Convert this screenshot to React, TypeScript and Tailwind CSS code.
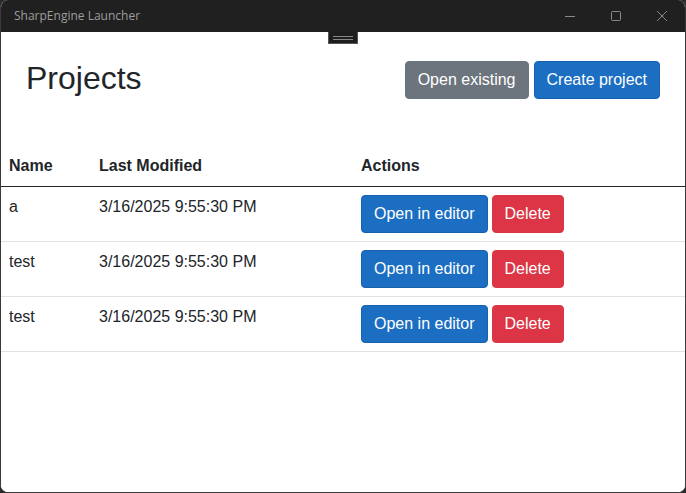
import React from "react";

const projects = [
  { name: "a", modified: "3/16/2025 9:55:30 PM" },
  { name: "test", modified: "3/16/2025 9:55:30 PM" },
  { name: "test", modified: "3/16/2025 9:55:30 PM" },
];

const TitleBar = () => {
  return (
    <div className="h-[32px] flex items-center bg-[#202020] text-[#9d9d9d] shrink-0">
      <span className="pl-[13px] text-[12px] flex-1 font-['Open_Sans',sans-serif]">
        SharpEngine Launcher
      </span>
      <div className="flex h-full">
        <div className="w-[46px] h-full flex items-center justify-center">
          <svg width="10" height="10" viewBox="0 0 10 10">
            <path d="M0 5.5h10" stroke="#8a8a8a" strokeWidth="1" />
          </svg>
        </div>
        <div className="w-[46px] h-full flex items-center justify-center">
          <svg width="10" height="10" viewBox="0 0 10 10">
            <rect x="0.5" y="0.5" width="9" height="9" rx="1" fill="none" stroke="#8a8a8a" strokeWidth="1" />
          </svg>
        </div>
        <div className="w-[46px] h-full flex items-center justify-center">
          <svg width="10" height="10" viewBox="0 0 10 10">
            <path d="M0 0L10 10M10 0L0 10" stroke="#8a8a8a" strokeWidth="1" />
          </svg>
        </div>
      </div>
    </div>
  );
};

const Btn = ({ children, kind }: any) => {
  const color =
    kind === "primary"
      ? "bg-[#1b6ec2] border-[#1861ac]"
      : kind === "danger"
      ? "bg-[#dc3545] border-[#dc3545]"
      : "bg-[#6c757d] border-[#6c757d]";
  return (
    <button
      className={`${color} border text-white rounded-[4px] px-[12px] py-[6px] text-[16px] leading-[24px] whitespace-nowrap`}
    >
      {children}
    </button>
  );
};

export default function App() {
  return (
    <div className="w-[686px] h-[493px] bg-[#2b2b2b] font-['Liberation_Sans',Arial,sans-serif] text-[#212529]">
      <div className="w-full h-full flex flex-col rounded-[8px] overflow-hidden border border-[#3a3a3a] border-t-0 bg-white">
        <TitleBar />
        <div className="relative flex-1 bg-white">
          <div className="absolute left-[327px] top-0 w-[30px] h-[12px] bg-[#1e1e1e] border border-[#555] border-t-0 flex flex-col items-center justify-center gap-[2px]">
            <div className="w-[20px] h-px bg-[#888]" />
            <div className="w-[20px] h-px bg-[#888]" />
          </div>
          <div className="flex items-center justify-between pl-[25px] pr-[25px] pt-[27px]">
            <h1 className="text-[32px] leading-[38px] mb-[4px]">Projects</h1>
            <div className="flex gap-[5px]">
              <Btn kind="secondary">Open existing</Btn>
              <Btn kind="primary">Create project</Btn>
            </div>
          </div>
          <table className="w-full mt-[45px] border-collapse text-[16px] leading-[24px]">
            <thead>
              <tr className="border-b border-[#212529]">
                <th className="text-left font-bold p-[8px] w-[90px]">Name</th>
                <th className="text-left font-bold p-[8px] w-[262px]">Last Modified</th>
                <th className="text-left font-bold p-[8px]">Actions</th>
              </tr>
            </thead>
            <tbody>
              {projects.map((p, i) => (
                <tr key={i} className="border-b border-[#dee2e6]">
                  <td className="align-top p-[8px]">{p.name}</td>
                  <td className="align-top p-[8px]">{p.modified}</td>
                  <td className="align-top p-[8px]">
                    <div className="flex gap-[4px]">
                      <Btn kind="primary">Open in editor</Btn>
                      <Btn kind="danger">Delete</Btn>
                    </div>
                  </td>
                </tr>
              ))}
            </tbody>
          </table>
        </div>
      </div>
    </div>
  );
}
